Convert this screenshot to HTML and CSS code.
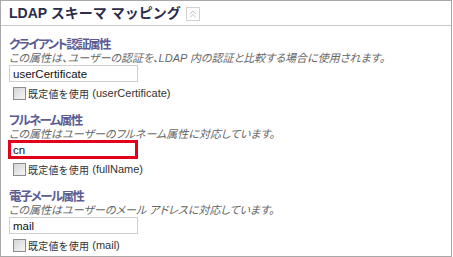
FILE: index.html
```html
<!DOCTYPE html>
<html lang="ja">
<head>
    <meta charset="UTF-8">
    <title>LDAP スキーマ マッピング</title>
    <link rel="stylesheet" href="styles.css">
</head>
<body>
    <div class="panel">
        <div class="panel-header">
            <h1>LDAP スキーマ マッピング</h1>
            <span class="collapse">
                <svg width="12" height="12" viewBox="0 0 12 12">
                    <path d="M3 6 L6 3 L9 6 M3 9.5 L6 6.5 L9 9.5" fill="none" stroke="#c4c4c4" stroke-width="1"/>
                </svg>
            </span>
        </div>
        <div class="panel-body">
            <div class="field">
                <h2>クライアント認証属性</h2>
                <p class="desc">この属性は、ユーザーの認証を、LDAP 内の認証と比較する場合に使用されます。</p>
                <input class="text" type="text" value="userCertificate">
                <label class="default"><input type="checkbox"><span class="jp">既定値を使用</span> (userCertificate)</label>
            </div>
            <div class="field">
                <h2>フルネーム属性</h2>
                <p class="desc">この属性はユーザーのフルネーム属性に対応しています。</p>
                <input class="text marked" type="text" value="cn">
                <label class="default"><input type="checkbox"><span class="jp">既定値を使用</span> (fullName)</label>
            </div>
            <div class="field">
                <h2>電子メール属性</h2>
                <p class="desc">この属性はユーザーのメール アドレスに対応しています。</p>
                <input class="text" type="text" value="mail">
                <label class="default"><input type="checkbox"><span class="jp">既定値を使用</span> (mail)</label>
            </div>
        </div>
    </div>
</body>
</html>
```

FILE: styles.css
```css
body {
    margin: 0;
    padding: 0;
    background: #ffffff;
    font-family: 'Liberation Sans', 'Noto Sans CJK JP', sans-serif;
    color: #333;
}

.panel {
    width: 452px;
    height: 257px;
    box-sizing: border-box;
    border: 1px solid #a8a8a8;
    overflow: hidden;
}

.panel-header {
    display: flex;
    align-items: center;
    height: 24px;
    padding-left: 8px;
    border-bottom: 1px solid #c8c8c8;
}

.panel-header h1 {
    margin: 0;
    font-size: 14px;
    font-weight: bold;
    color: #2c2c4c;
    line-height: 16px;
}

.collapse {
    display: flex;
    align-items: center;
    justify-content: center;
    width: 14px;
    height: 14px;
    box-sizing: border-box;
    margin-left: 5px;
    margin-top: 2px;
    border: 1px solid #d2d2d2;
}

.panel-body {
    padding: 9px 8px 0;
}

.field {
    margin-bottom: 11px;
}

.field h2 {
    margin: 0;
    font-family: 'Noto Sans CJK JP', sans-serif;
    font-size: 12.5px;
    line-height: 17px;
    font-weight: bold;
    letter-spacing: -1.6px;
    color: #5c5c92;
    font-feature-settings: "palt";
}

.desc {
    margin: 0;
    font-size: 11px;
    line-height: 13px;
    font-style: italic;
    color: #666;
    font-feature-settings: "palt";
}

.text {
    display: block;
    width: 129px;
    height: 17px;
    box-sizing: border-box;
    margin: 0;
    padding: 0 3px;
    border: 1px solid #cfcfcf;
    font-family: 'Liberation Sans', sans-serif;
    font-size: 11.5px;
    color: #111;
    outline: none;
}

.text.marked {
    width: 130px;
    height: 19px;
    margin: -1px 0 -1px -1px;
    border: 3px solid #e2001a;
    padding: 0 2px;
}

.default {
    display: flex;
    align-items: center;
    height: 14px;
    margin-top: 4px;
    padding-left: 4px;
    font-size: 11px;
    color: #333;
    white-space: pre;
}

.default input {
    appearance: none;
    width: 13px;
    height: 13px;
    margin: 0 2px 0 0;
    box-sizing: border-box;
    border: 1px solid #8c8c8c;
    background: linear-gradient(135deg, #d4d4d4, #f6f6f6);
}

.default .jp {
    font-size: 10px;
    letter-spacing: 0.2px;
}
```
